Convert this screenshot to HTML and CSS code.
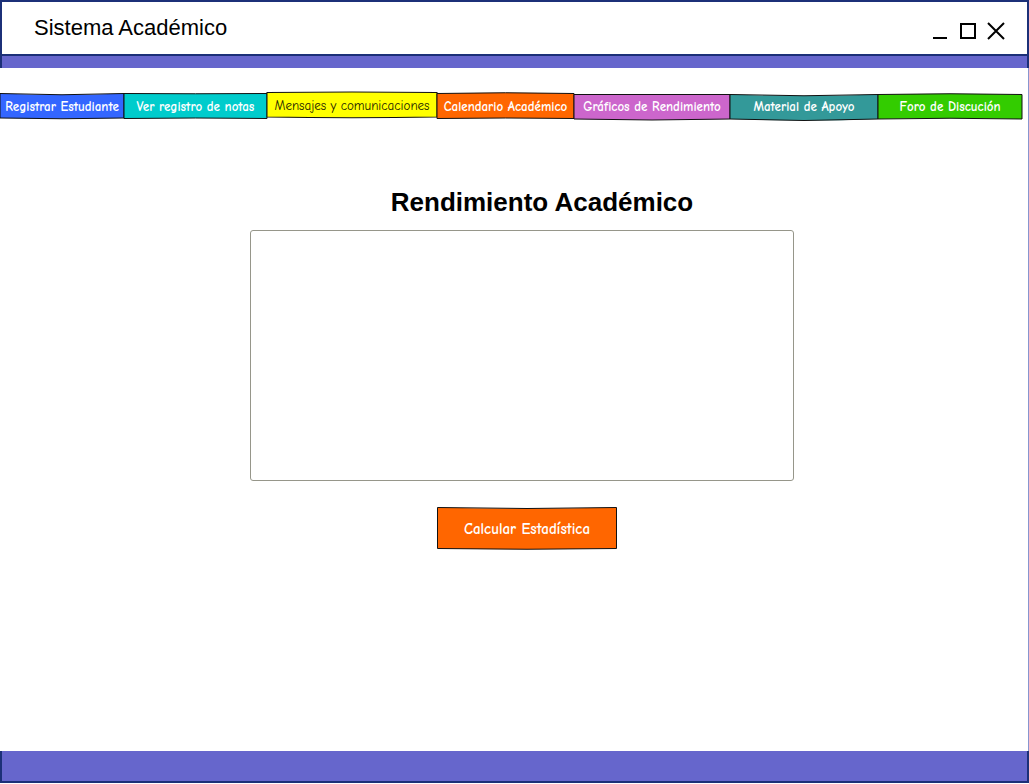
FILE: index.html
```html
<!DOCTYPE html>
<html lang="es">
<head>
<meta charset="utf-8">
<meta name="viewport" content="width=device-width, initial-scale=1">
<title>Sistema Académico</title>
<link rel="stylesheet" href="styles.css">
</head>
<body>
<div class="window">
  <header class="titlebar">
    <span class="titlebar-name">Sistema Académico</span>
    <div class="controls">
      <button class="control" type="button" aria-label="Minimizar"><svg viewBox="0 0 20 20"><path d="M3 17H17"/></svg></button>
      <button class="control" type="button" aria-label="Maximizar"><svg viewBox="0 0 20 20"><path d="M3 3H17V17H3Z"/></svg></button>
      <button class="control" type="button" aria-label="Cerrar"><svg viewBox="0 0 20 20"><path d="M2 2L18 18M18 2L2 18"/></svg></button>
    </div>
  </header>
  <div class="band"></div>
  <div class="page">
    <nav class="tabs">
      <button class="tab blue" type="button"><svg class="shape" viewBox="0 0 100 30" preserveAspectRatio="none"><path d="M0 2.5Q50 5 100 2.5V27Q50 28.5 0 27Z"/></svg><span>Registrar Estudiante</span></button>
      <button class="tab cyan" type="button"><svg class="shape" viewBox="0 0 100 30" preserveAspectRatio="none"><path d="M0 2.5Q50 3 100 2.5V27.5Q50 26.5 0 27.5Z"/></svg><span>Ver registro de notas</span></button>
      <button class="tab yellow" type="button"><svg class="shape" viewBox="0 0 100 30" preserveAspectRatio="none"><path d="M0 1.5Q50 .5 100 1.5V26Q50 27.5 0 26Z"/></svg><span>Mensajes y comunicaciones</span></button>
      <button class="tab orange" type="button"><svg class="shape" viewBox="0 0 100 30" preserveAspectRatio="none"><path d="M0 2.5Q50 1 100 2.5V27.5Q50 26.5 0 27.5Z"/></svg><span>Calendario Académico</span></button>
      <button class="tab purple" type="button"><svg class="shape" viewBox="0 0 100 30" preserveAspectRatio="none"><path d="M0 3.5H100V28Q50 30 0 28Z"/></svg><span>Gráficos de Rendimiento</span></button>
      <button class="tab teal" type="button"><svg class="shape" viewBox="0 0 100 30" preserveAspectRatio="none"><path d="M0 3.5Q50 6 100 3.5V28Q50 31 0 28Z"/></svg><span>Material de Apoyo</span></button>
      <button class="tab green" type="button"><svg class="shape" viewBox="0 0 100 30" preserveAspectRatio="none"><path d="M0 3.5Q50 2 100 3.5V28Q50 26.5 0 28Z"/></svg><span>Foro de Discución</span></button>
    </nav>
    <main class="content">
      <h1 class="heading">Rendimiento Académico</h1>
      <section class="chart" aria-label="Gráfico de rendimiento"></section>
      <div class="actions">
        <button class="tab orange calculate" type="button"><svg class="shape" viewBox="0 0 180 44" preserveAspectRatio="none"><path d="M.5 1.5Q90 3.5 179.5 1.5V42.500Q90 44 .5 42.5Z"/></svg><span>Calcular Estadística</span></button>
      </div>
    </main>
  </div>
  <footer class="footer"></footer>
</div>
</body>
</html>
```
FILE: styles.css
```css
* { box-sizing: border-box; }

body {
  margin: 0;
  background: #fff;
  color: #000;
  font-family: "Liberation Sans", Arial, sans-serif;
}

button {
  border: 0;
  padding: 0;
  background: none;
  color: inherit;
  font: inherit;
  cursor: pointer;
}

.window {
  display: flex;
  flex-direction: column;
  min-height: 100vh;
  padding-bottom: 1px;
}

.titlebar {
  display: flex;
  justify-content: space-between;
  align-items: center;
  height: 56px;
  padding: 0 21px 0 32px;
  border: 2px solid #1c3078;
}

.titlebar-name {
  font-size: 22px;
  line-height: 26px;
}

.controls {
  display: flex;
  gap: 8px;
  padding-top: 6px;
}

.control {
  width: 20px;
  height: 20px;
}

.control svg {
  display: block;
  width: 20px;
  height: 20px;
  fill: none;
  stroke: #000;
  stroke-width: 2;
}

.band {
  height: 12px;
  border: solid #1c3078;
  border-width: 0 2px;
  background: #6666cc;
}

.page {
  flex: 1;
  padding-top: 23px;
  border-right: 1px solid #8795cf;
}

.tabs {
  display: grid;
  grid-template-columns: 124fr 143fr 170fr 137fr 156fr 148fr 144fr;
  margin-right: 6px;
}

.tab {
  position: relative;
  height: 30px;
  padding-top: 2px;
  color: #fff;
  font-family: "Comic Sans MS", "Comic Neue", Lato, sans-serif;
  font-size: 13px;
  font-weight: 700;
  line-height: 16px;
  white-space: nowrap;
}

.tab span { position: relative; }

.shape {
  position: absolute;
  inset: 0;
  width: 100%;
  height: 100%;
  overflow: visible;
}

.shape path {
  fill: currentColor;
  stroke: #111;
  stroke-width: 1;
  vector-effect: non-scaling-stroke;
}

.blue path { fill: #3366ff; }
.cyan path { fill: #00cccc; }
.yellow path { fill: #ffff00; }
.orange path { fill: #ff6600; }
.purple path { fill: #cc66cc; }
.teal path { fill: #339999; }
.green path { fill: #33cc00; }

.yellow {
  padding-top: 0;
  color: #222200;
  font-weight: 400;
}

.content {
  width: 560px;
  max-width: 100%;
  margin: 0 auto;
  padding: 65px 0 24px 16px;
}

.heading {
  margin: 0 0 12px;
  padding-left: 40px;
  font-size: 26px;
  line-height: 32px;
  text-align: center;
}

.chart {
  height: 251px;
  border: 1px solid #96968a;
  border-radius: 3px;
}

.actions {
  display: flex;
  justify-content: center;
  padding: 25px 0 0 10px;
}

.calculate {
  width: 180px;
  height: 44px;
  font-size: 15px;
}

.footer {
  height: 32px;
  border: solid #1c3078;
  border-width: 0 2px 2px;
  background: #6666cc;
}
```
